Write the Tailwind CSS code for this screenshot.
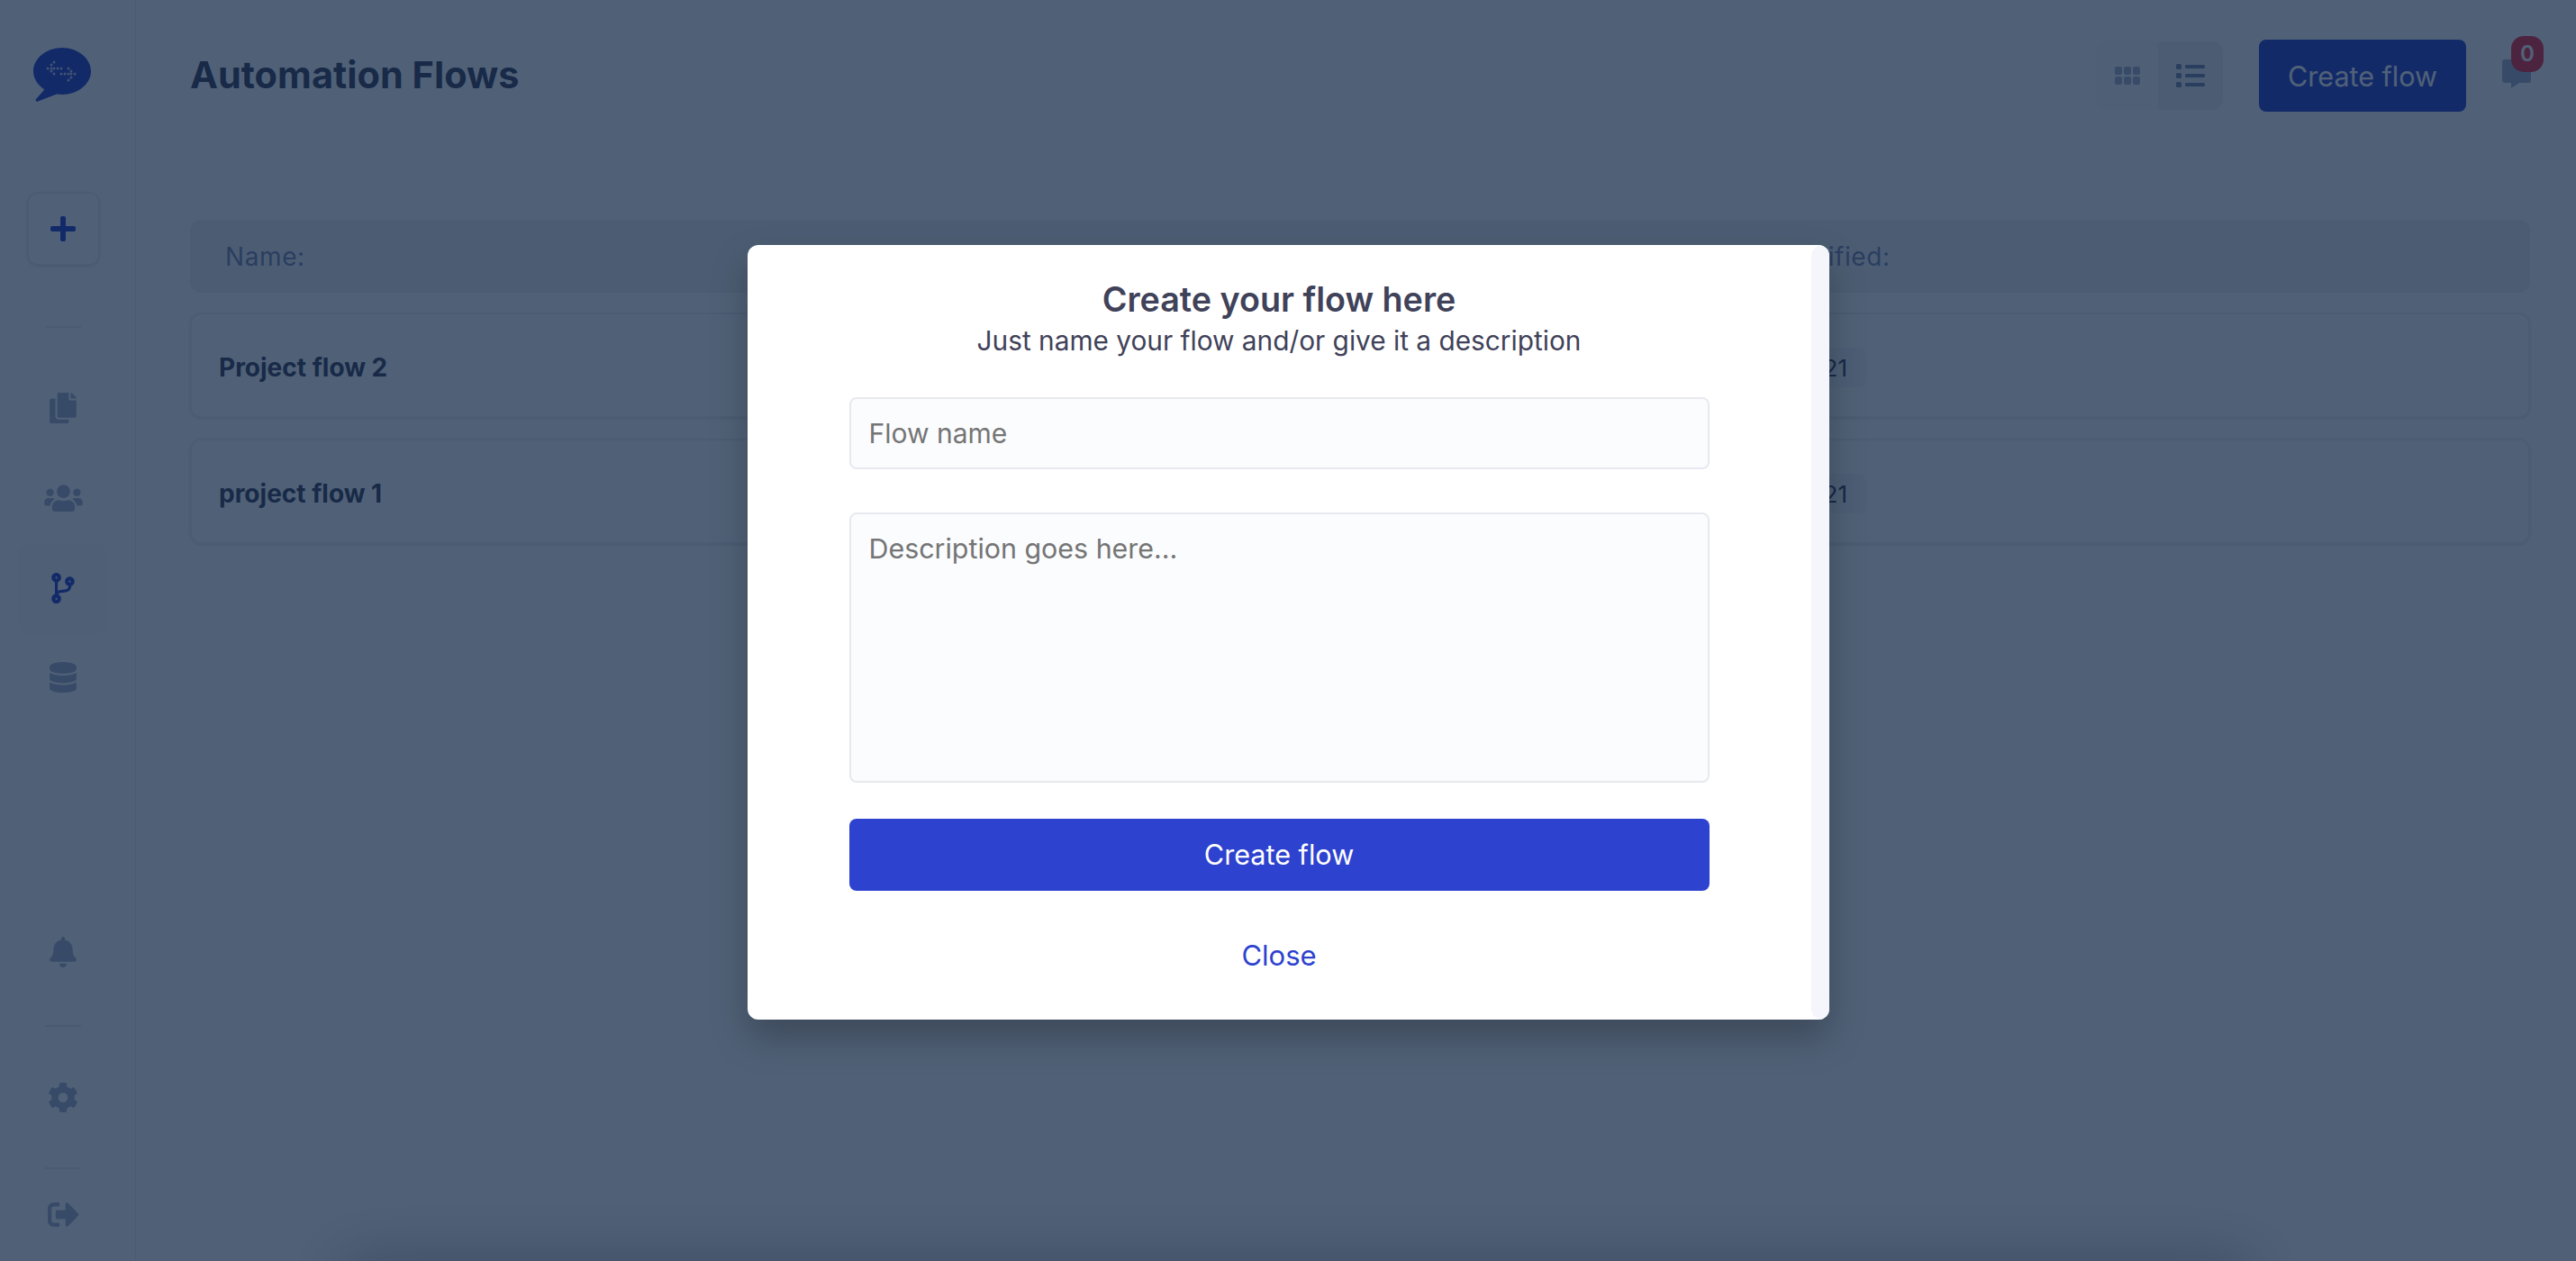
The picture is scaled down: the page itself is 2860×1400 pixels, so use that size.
<!DOCTYPE html>
<html lang="en">
<head>
    <meta charset="UTF-8">
    <title>Automation Flows</title>
    <script src="https://cdn.jsdelivr.net/npm/@tailwindcss/browser@4"></script>
</head>
<body class="bg-white font-['Inter',sans-serif]">
    <div class="relative h-[1400px] w-[2860px] overflow-hidden flex">
        <!-- sidebar -->
        <aside class="w-[151px] h-full shrink-0 border-r border-[#e6e6ea] flex flex-col items-center pr-[10px] pt-[53px] pb-[38px]">
            <svg class="w-[64px] h-[60px] shrink-0 -translate-x-[1px]" viewBox="0 0 64 60">
                <path fill="#2d42cf" d="M32 0C14.500 0 0 11.700 0 26c0 8.300 4.800 15.600 12.300 20.400L3 57c-1 1.700.4 3.300 2.200 2.600L26 51.500c2 .3 4 .5 6 .5 17.500 0 32-11.700 32-26S49.500 0 32 0z"/>
                <g fill="#c5ccee">
                    <circle cx="23" cy="16" r="1.500"/><circle cx="20" cy="19" r="1.500"/><circle cx="16" cy="23" r="1.500"/><circle cx="20" cy="23" r="1.500"/><circle cx="23" cy="23" r="1.500"/><circle cx="27" cy="23" r="1.500"/><circle cx="31" cy="23" r="1.500"/><circle cx="20" cy="26" r="1.500"/><circle cx="23" cy="29" r="1.500"/>
                    <circle cx="39" cy="23" r="1.500"/><circle cx="42" cy="26" r="1.500"/><circle cx="31" cy="29" r="1.500"/><circle cx="35" cy="29" r="1.500"/><circle cx="39" cy="29" r="1.500"/><circle cx="42" cy="29" r="1.500"/><circle cx="46" cy="29" r="1.500"/><circle cx="42" cy="33" r="1.500"/><circle cx="39" cy="36" r="1.500"/>
                </g>
            </svg>
            <button class="mt-[100px] w-[81px] h-[82px] shrink-0 rounded-xl border-2 border-[#ebebf0] flex items-center justify-center shadow-sm">
                <svg class="w-[28px] h-[28px] fill-[#2d42cf]" viewBox="0 32 448 448"><path d="M416 208H272V64c0-17.670-14.330-32-32-32h-32c-17.670 0-32 14.330-32 32v144H32c-17.670 0-32 14.330-32 32v32c0 17.670 14.330 32 32 32h144v144c0 17.670 14.330 32 32 32h32c17.670 0 32-14.330 32-32V304h144c17.670 0 32-14.330 32-32v-32c0-17.670-14.330-32-32-32z"/></svg>
            </button>
            <div class="mt-[67px] w-[40px] h-[2px] shrink-0 bg-[#e6e6ea]"></div>
            <svg class="mt-[72px] w-[30px] h-[34px] shrink-0 fill-[#a9b2cc]" viewBox="0 0 448 512"><path d="M320 448v40c0 13.255-10.745 24-24 24H24c-13.255 0-24-10.745-24-24V120c0-13.255 10.745-24 24-24h72v296c0 30.879 25.121 56 56 56h168zm0-344V0H152c-13.255 0-24 10.745-24 24v368c0 13.255 10.745 24 24 24h272c13.255 0 24-10.745 24-24V128H344c-13.200 0-24-10.800-24-24zm120.971-31.029L375.029 7.029A24 24 0 0 0 358.059 0H352v96h96v-6.059a24 24 0 0 0-7.029-16.970z"/></svg>
            <svg class="mt-[66px] w-[43px] h-[34px] shrink-0 fill-[#a9b2cc]" viewBox="0 0 640 512"><path d="M96 224c35.300 0 64-28.700 64-64s-28.700-64-64-64-64 28.700-64 64 28.700 64 64 64zm448 0c35.300 0 64-28.700 64-64s-28.700-64-64-64-64 28.700-64 64 28.700 64 64 64zm32 32h-64c-17.600 0-33.500 7.100-45.100 18.600 40.300 22.100 68.900 62 75.100 109.400h66c17.700 0 32-14.300 32-32v-32c0-35.300-28.700-64-64-64zm-256 0c61.900 0 112-50.100 112-112S381.900 32 320 32 208 82.100 208 144s50.100 112 112 112zm76.800 32h-8.300c-20.800 10-43.900 16-68.500 16s-47.600-6-68.500-16h-8.300C179.600 288 128 339.600 128 403.200V432c0 26.500 21.500 48 48 48h288c26.500 0 48-21.500 48-48v-28.800c0-63.600-51.600-115.200-115.200-115.200zm-223.700-13.400C161.500 263.100 145.600 256 128 256H64c-35.300 0-64 28.700-64 64v32c0 17.700 14.300 32 32 32h65.900c6.300-47.400 34.900-87.300 75.200-109.400z"/></svg>
            <div class="mt-[34px] w-[100px] h-[100px] shrink-0 rounded-xl bg-[#f9f9fb] flex items-center justify-center pb-[3px]">
                <svg class="w-[26px] h-[34px] fill-[#2d42cf]" viewBox="0 0 384 512"><path d="M384 144c0-44.200-35.800-80-80-80s-80 35.800-80 80c0 36.400 24.300 67.100 57.500 76.800-.6 16.100-4.200 28.500-11 36.900-15.400 19.200-49.300 22.400-85.200 25.700-28.200 2.600-57.400 5.400-81.300 16.900v-144c32.500-10.200 56-40.500 56-76.300 0-44.200-35.800-80-80-80S0 35.800 0 80c0 35.800 23.500 66.100 56 76.300v199.300C23.500 365.900 0 396.200 0 432c0 44.200 35.800 80 80 80s80-35.800 80-80c0-34-21.200-63.100-51.200-74.600 3.100-5.200 7.800-9.800 14.900-13.400 16.200-8.200 40.400-10.400 66.100-12.800 42.200-3.900 90-8.400 118.200-43.400 14-17.400 21.100-39.800 21.600-67.900 31.600-10.800 54.400-40.700 54.400-75.900zM80 64c8.800 0 16 7.200 16 16s-7.200 16-16 16-16-7.200-16-16 7.200-16 16-16zm0 384c-8.800 0-16-7.200-16-16s7.200-16 16-16 16 7.200 16 16-7.200 16-16 16zm224-320c8.800 0 16 7.200 16 16s-7.200 16-16 16-16-7.200-16-16 7.200-16 16-16z"/></svg>
            </div>
            <svg class="mt-[31px] w-[30px] h-[34px] shrink-0 fill-[#a9b2cc]" viewBox="0 0 448 512"><path d="M448 73.143v45.714C448 159.143 347.667 192 224 192S0 159.143 0 118.857V73.143C0 32.857 100.333 0 224 0s224 32.857 224 73.143zM448 176v102.857C448 319.143 347.667 352 224 352S0 319.143 0 278.857V176c48.125 33.143 136.208 48.572 224 48.572S399.874 209.143 448 176zm0 160v102.857C448 479.143 347.667 512 224 512S0 479.143 0 438.857V336c48.125 33.143 136.208 48.572 224 48.572S399.874 369.143 448 336z"/></svg>
            <svg class="mt-auto w-[30px] h-[34px] shrink-0 fill-[#a9b2cc]" viewBox="0 0 448 512"><path d="M224 512c35.320 0 63.970-28.650 63.970-64H160.030c0 35.350 28.650 64 63.970 64zm215.390-149.710c-19.320-20.760-55.470-51.990-55.470-154.290 0-77.700-54.480-139.900-127.940-155.160V32c0-17.670-14.320-32-31.980-32s-31.980 14.330-31.980 32v20.840C118.560 68.100 64.080 130.300 64.080 208c0 102.300-36.150 133.530-55.470 154.290-6 6.450-8.660 14.160-8.610 21.710.11 16.400 12.980 32 32.100 32h383.800c19.120 0 32-15.600 32.100-32 .05-7.550-2.610-15.270-8.610-21.710z"/></svg>
            <div class="mt-[64px] w-[40px] h-[2px] shrink-0 bg-[#e6e6ea]"></div>
            <svg class="mt-[61px] w-[34px] h-[35px] shrink-0 fill-[#a9b2cc]" viewBox="0 0 512 512"><path d="M487.400 315.700l-42.600-24.600c4.300-23.200 4.300-47 0-70.200l42.600-24.600c4.900-2.800 7.100-8.600 5.500-14-11.100-35.600-30-67.800-54.700-94.600-3.800-4.100-10-5.100-14.800-2.300L380.800 110c-17.900-15.400-38.500-27.300-60.800-35.100V25.800c0-5.600-3.900-10.500-9.400-11.700-36.700-8.200-74.300-7.800-109.200 0-5.500 1.200-9.400 6.100-9.400 11.700V75c-22.200 7.900-42.800 19.800-60.800 35.100L88.700 85.500c-4.900-2.800-11-1.900-14.800 2.300-24.700 26.700-43.600 58.900-54.700 94.600-1.700 5.400.6 11.200 5.500 14L67.300 221c-4.300 23.200-4.300 47 0 70.200l-42.600 24.600c-4.900 2.800-7.100 8.600-5.500 14 11.100 35.600 30 67.800 54.700 94.600 3.800 4.100 10 5.100 14.800 2.300l42.600-24.600c17.900 15.400 38.500 27.300 60.800 35.100v49.200c0 5.600 3.900 10.500 9.400 11.700 36.700 8.200 74.300 7.800 109.200 0 5.500-1.200 9.400-6.100 9.400-11.700v-49.200c22.200-7.900 42.800-19.800 60.800-35.100l42.600 24.600c4.900 2.800 11 1.900 14.800-2.300 24.700-26.700 43.600-58.900 54.700-94.600 1.500-5.500-.7-11.300-5.600-14.100zM256 336c-44.100 0-80-35.900-80-80s35.900-80 80-80 80 35.900 80 80-35.900 80-80 80z"/></svg>
            <div class="mt-[60px] w-[40px] h-[2px] shrink-0 bg-[#e6e6ea]"></div>
            <svg class="mt-[37px] w-[35px] h-[27px] shrink-0 fill-[#a9b2cc]" viewBox="0 64 512 384" preserveAspectRatio="none"><path d="M497 273L329 441c-15 15-41 4.500-41-17v-96H152c-13.300 0-24-10.700-24-24v-96c0-13.300 10.700-24 24-24h136V88c0-21.400 25.900-32 41-17l168 168c9.300 9.400 9.300 24.600 0 34zM192 436v-40c0-6.600-5.400-12-12-12H96c-17.700 0-32-14.300-32-32V160c0-17.700 14.300-32 32-32h84c6.600 0 12-5.400 12-12V76c0-6.600-5.400-12-12-12H96c-53 0-96 43-96 96v192c0 53 43 96 96 96h84c6.600 0 12-5.400 12-12z"/></svg>
        </aside>

        <!-- main -->
        <main class="flex-1 pl-[60px] pr-[51px]">
            <header class="relative h-[168px] flex items-start">
                <h1 class="mt-[58px] text-[41.500px] leading-[50px] font-bold text-[#3f4259]">Automation Flows</h1>
                <div class="ml-auto mt-[46px] flex">
                    <button class="w-[69px] h-[76px] rounded-l-xl bg-[#fbfbfc] flex items-center justify-center">
                        <svg class="w-[28px] h-[20px] fill-[#a9b2cc]" viewBox="0 0 28 20">
                            <rect x="0" y="0" width="8" height="9" rx="2"/><rect x="10" y="0" width="8" height="9" rx="2"/><rect x="20" y="0" width="8" height="9" rx="2"/>
                            <rect x="0" y="11" width="8" height="9" rx="2"/><rect x="10" y="11" width="8" height="9" rx="2"/><rect x="20" y="11" width="8" height="9" rx="2"/>
                        </svg>
                    </button>
                    <button class="w-[72px] h-[76px] rounded-r-xl bg-[#f1f1f1] flex items-center justify-center">
                        <svg class="w-[32px] h-[26px] fill-[#7c88b0]" viewBox="0 0 32 26">
                            <rect x="0" y="0" width="6" height="6" rx="1.500"/><rect x="10" y="1" width="22" height="4" rx="1"/>
                            <rect x="0" y="10" width="6" height="6" rx="1.500"/><rect x="10" y="11" width="22" height="4" rx="1"/>
                            <rect x="0" y="20" width="6" height="6" rx="1.500"/><rect x="10" y="21" width="22" height="4" rx="1"/>
                        </svg>
                    </button>
                </div>
                <button class="ml-[40px] mt-[44px] w-[230px] h-[80px] pt-[2px] rounded-lg bg-[#2d42cf] text-white text-[30.500px]">Create flow</button>
                <div class="relative ml-[40px] mt-[66px] w-[32px] h-[32px] mr-[-1px]">
                    <svg class="w-[32px] h-[32px] fill-[#a9b2cc]" viewBox="0 0 32 32"><path d="M3 0h26a3 3 0 0 1 3 3v20a3 3 0 0 1-3 3H19l-9 6v-6H3a3 3 0 0 1-3-3V3a3 3 0 0 1 3-3z"/></svg>
                    <span class="absolute left-[10px] top-[-26px] w-[36px] h-[40px] rounded-[14px] bg-[#f52d42] text-white text-[24px] font-semibold flex items-center justify-center">0</span>
                </div>
            </header>

            <div class="mt-[76px] h-[81px] rounded-xl bg-[#f1f1f1] grid grid-cols-[1697px_1fr] items-center pl-[39px] text-[28px] tracking-[0.6px] text-[#7c88b0]">
                <span>Name:</span>
                <span class="ml-[-44px]">Last modified:</span>
            </div>
            <div class="mt-[22px] h-[117px] pt-[5px] rounded-xl border-2 border-[#ececf0] shadow-sm grid grid-cols-[1697px_1fr] items-center pl-[30px]">
                <span class="text-[28px] font-bold text-[#3f4259]">Project flow 2</span>
                <span class="ml-[-30px] w-[161px] h-[44px] rounded-lg bg-[#f4f4f6] flex items-center justify-end pr-[20px] whitespace-nowrap text-[26px] text-[#3f4259]">Mar 3, 2021</span>
            </div>
            <div class="mt-[23px] h-[117px] pt-[5px] rounded-xl border-2 border-[#ececf0] shadow-sm grid grid-cols-[1697px_1fr] items-center pl-[30px]">
                <span class="text-[28px] font-bold text-[#3f4259]">project flow 1</span>
                <span class="ml-[-30px] w-[161px] h-[44px] rounded-lg bg-[#f4f4f6] flex items-center justify-end pr-[20px] whitespace-nowrap text-[26px] text-[#3f4259]">Mar 3, 2021</span>
            </div>
        </main>

        <div class="absolute left-[380px] right-[360px] bottom-[-60px] h-[60px] shadow-[0_0_70px_rgba(0,0,0,0.3)]"></div>

        <!-- modal -->
        <div class="absolute inset-0 bg-[#08203f]/[0.71] flex items-center justify-center">
            <div class="mt-[4px] w-[1201px] h-[860px] rounded-xl bg-white flex overflow-hidden shadow-[0_20px_40px_rgba(0,0,0,0.25)]">
                <div class="flex-1 flex flex-col items-center px-[113px] pt-[38px]">
                    <h2 class="text-[37.700px] leading-[44px] font-semibold text-[#3f4259]">Create your flow here</h2>
                    <p class="mt-[3px] text-[29.800px] leading-[42px] text-[#3f4259]">Just name your flow and/or give it a description</p>
                    <input type="text" placeholder="Flow name" class="mt-[42px] w-full h-[80px] shrink-0 rounded-lg border-2 border-[#e8e9f0] bg-[#fbfcfe] px-[20px] text-[30px] placeholder:text-[#757575]">
                    <textarea placeholder="Description goes here..." class="mt-[48px] w-full h-[300px] shrink-0 rounded-lg border-2 border-[#e8e9f0] bg-[#fbfcfe] px-[20px] py-[18px] text-[30.400px] leading-[40px] resize-none placeholder:text-[#757575]"></textarea>
                    <button class="mt-[40px] w-full h-[80px] shrink-0 rounded-lg bg-[#2d42cf] text-white text-[30.600px]">Create flow</button>
                    <button class="mt-[52px] text-[31px] leading-[40px] text-[#2d42cf]">Close</button>
                </div>
                <div class="w-[20px] shrink-0 rounded-l-xl bg-[#f4f6fb]"></div>
            </div>
        </div>
    </div>
</body>
</html>
